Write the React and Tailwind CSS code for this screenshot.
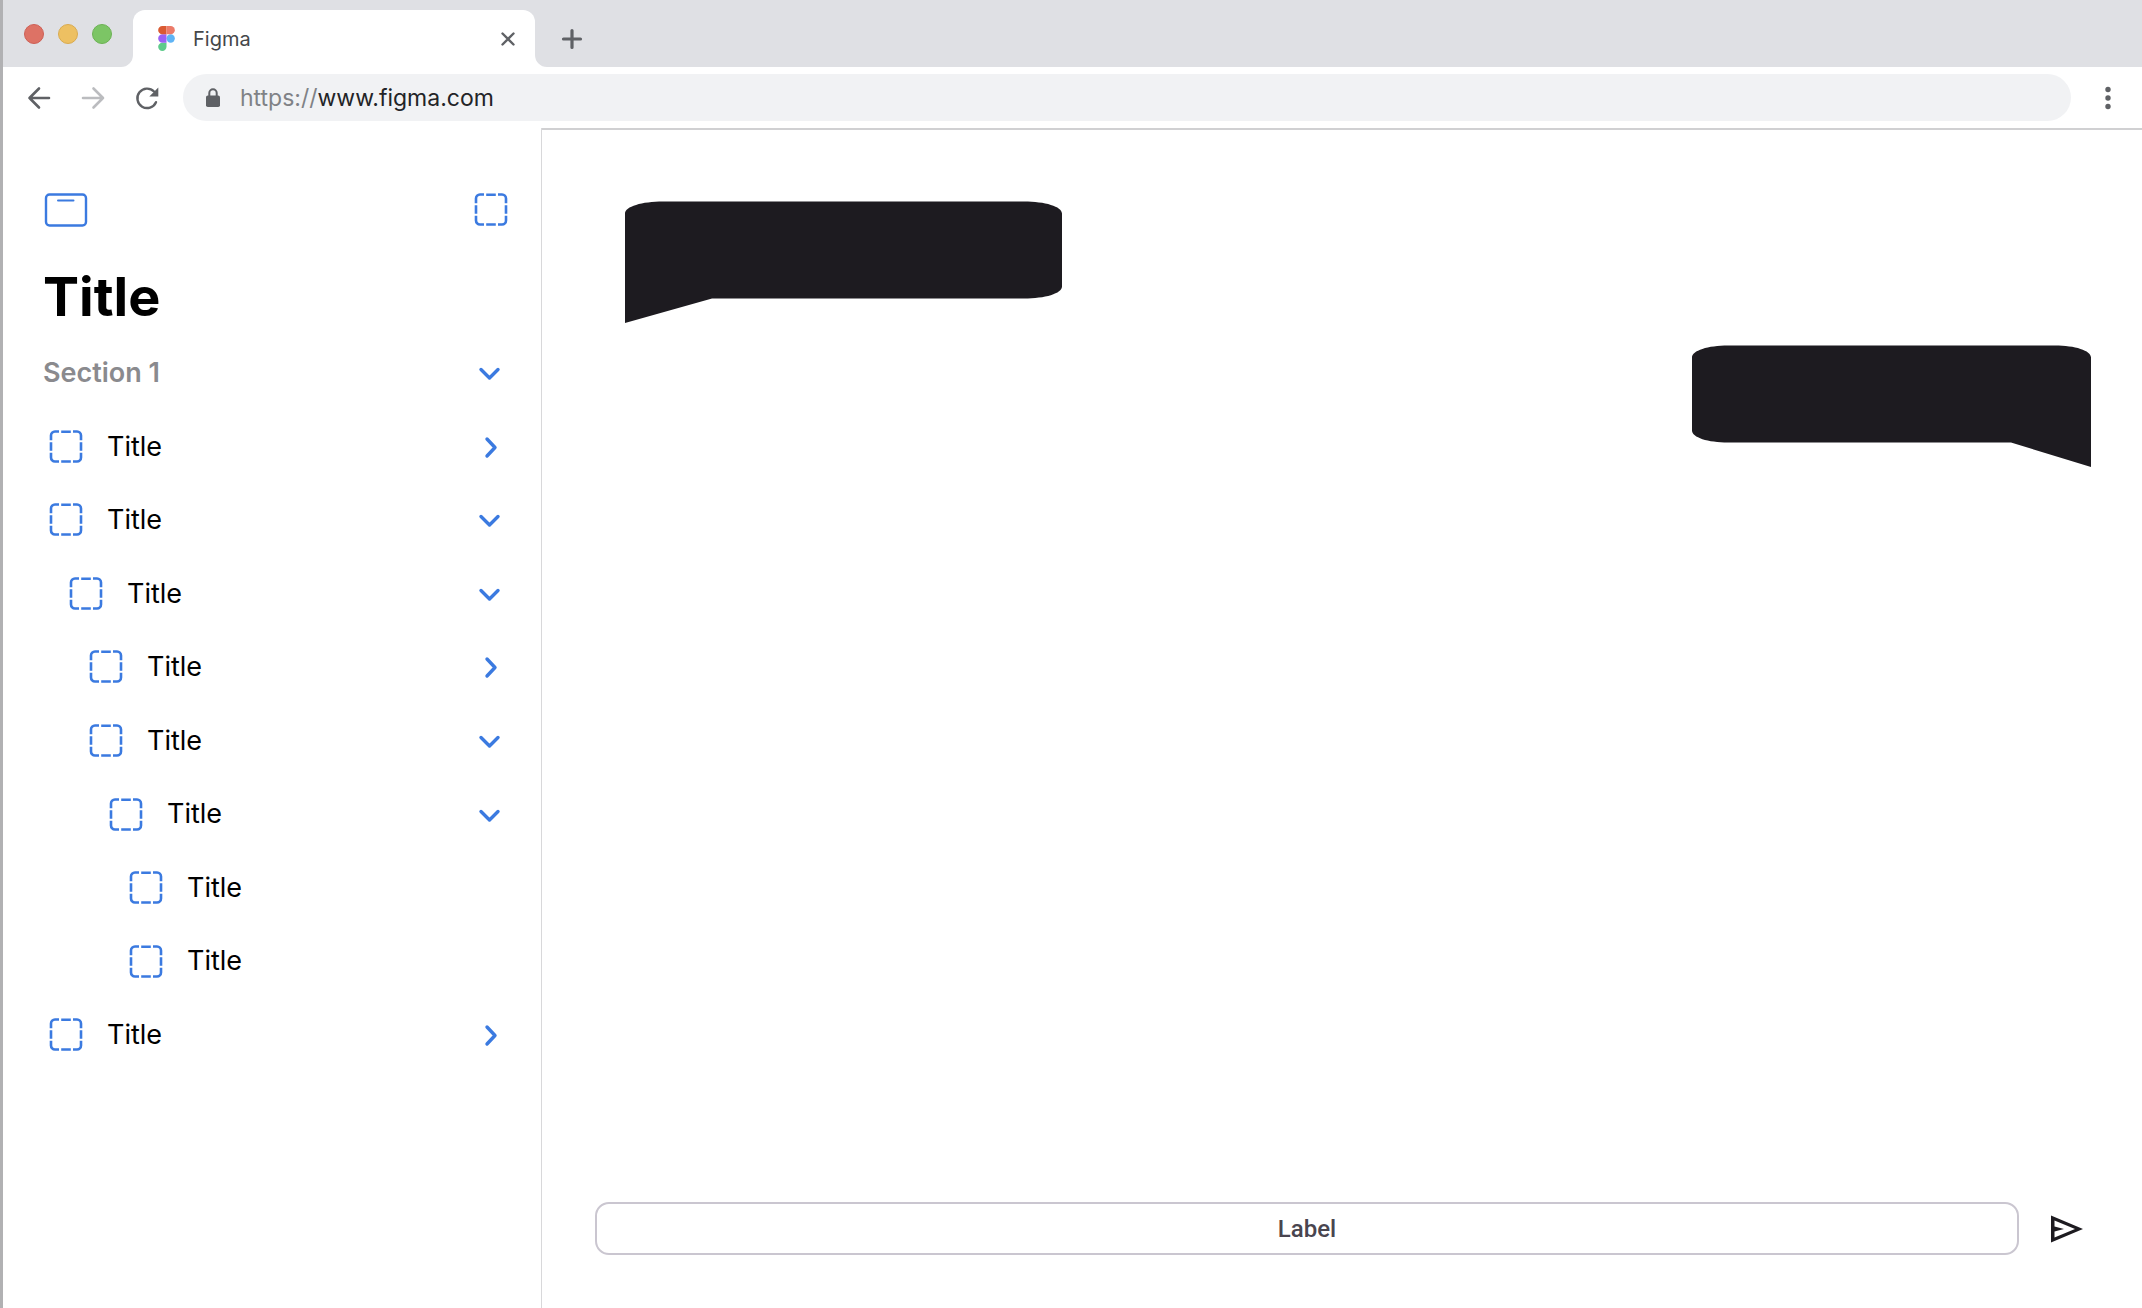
import React from "react";

const ROWS = [
  { depth: 0, state: "closed" },
  { depth: 0, state: "open" },
  { depth: 1, state: "open" },
  { depth: 2, state: "closed" },
  { depth: 2, state: "open" },
  { depth: 3, state: "open" },
  { depth: 4, state: "leaf" },
  { depth: 4, state: "leaf" },
  { depth: 0, state: "closed" },
];

const INDENTS = ["pl-[46px]", "pl-[66px]", "pl-[86px]", "pl-[106px]", "pl-[126px]"];

function DashedSquare() {
  return (
    <svg className="size-[34px] shrink-0" viewBox="0 0 34 34" fill="none" stroke="#3b7ae0" strokeWidth="2.6" aria-hidden="true">
      <path d="M2 9.700V5a4 4 0 0 1 4-4h4M24 1h4a4 4 0 0 1 4 4v4.700M32 22.300V27a4 4 0 0 1-4 4h-4M10 31H6a4 4 0 0 1-4-4v-4.700M12.200 1.300h9.600M12.200 31h9.600M2 11.700v8.600M32 11.700v8.600" transform="translate(0 .5)" />
    </svg>
  );
}

function Chevron({ open }) {
  return (
    <svg className="size-6" viewBox="0 0 24 24" fill="none" stroke="#3b7ae0" strokeWidth="3.400" strokeLinecap="round" strokeLinejoin="round" aria-hidden="true">
      <path d={open ? "M4 8.500L12.500 17L21 8.500" : "M10 4L18 12.500L10 21"} />
    </svg>
  );
}

function TabBar() {
  return (
    <header className="flex h-[67px] items-end bg-[#dfe0e4]">
      <div className="flex h-full w-[130px] shrink-0 items-center gap-[14px] pl-[21px]">
        <button aria-label="Close window" className="size-5 rounded-full border border-[#ce5f55] bg-[#dd7265]" />
        <button aria-label="Minimise window" className="size-5 rounded-full border border-[#d9ab50] bg-[#edc062]" />
        <button aria-label="Zoom window" className="size-5 rounded-full border border-[#6cb254] bg-[#7cc565]" />
      </div>
      <div className="relative flex h-[57px] w-[402px] shrink-0 items-center rounded-t-xl bg-white pr-[17px] pl-[25px]">
        <svg className="absolute bottom-0 -left-3 size-3" viewBox="0 0 12 12" fill="#fff" aria-hidden="true"><path d="M12 0v12H0A12 12 0 0 0 12 0z" /></svg>
        <svg className="absolute -right-3 bottom-0 size-3" viewBox="0 0 12 12" fill="#fff" aria-hidden="true"><path d="M0 0v12h12A12 12 0 0 1 0 0z" /></svg>
        <svg className="h-[25px] w-[17px]" viewBox="0 0 38 57" aria-hidden="true">
          <path fill="#5ecb8b" d="M0 47.500A9.500 9.500 0 0 1 9.500 38H19v9.500a9.500 9.500 0 1 1-19 0z" />
          <path fill="#5fb4f5" d="M19 28.500a9.500 9.500 0 1 1 19 0 9.500 9.500 0 0 1-19 0z" />
          <path fill="#9a61f5" d="M0 28.500A9.500 9.500 0 0 1 9.500 19H19v19H9.500A9.500 9.500 0 0 1 0 28.500z" />
          <path fill="#da5a32" d="M0 9.500A9.500 9.500 0 0 0 9.500 19H19V0H9.500A9.500 9.500 0 0 0 0 9.500z" />
          <path fill="#ec7b69" d="M19 0v19h9.500a9.500 9.500 0 1 0 0-19H19z" />
        </svg>
        <span className="ml-[18px] flex-1 text-xl text-[#45474a]">Figma</span>
        <button aria-label="Close tab" className="flex size-5 items-center justify-center">
          <svg className="size-4" viewBox="0 0 16 16" stroke="#5f6165" strokeWidth="2.400" strokeLinecap="round" aria-hidden="true"><path d="M2.500 2.500l11 11M13.500 2.500l-11 11" /></svg>
        </button>
      </div>
      <button aria-label="New tab" className="ml-[25px] flex h-[57px] w-6 items-center justify-center">
        <svg className="size-6" viewBox="0 0 24 24" stroke="#5f6165" strokeWidth="3.200" strokeLinecap="round" aria-hidden="true"><path d="M12 3.500v17M3.500 12h17" /></svg>
      </button>
    </header>
  );
}

function AddressBar() {
  return (
    <div className="flex h-[61px] items-center pr-[22px] pl-[22px]">
      <button aria-label="Back" className="size-7">
        <svg viewBox="0 0 28 28" fill="none" stroke="#5f6165" strokeWidth="2.600" strokeLinecap="round" strokeLinejoin="round"><path d="M24 14H4.500M14 4.500L4.500 14l9.500 9.500" /></svg>
      </button>
      <button aria-label="Forward" className="ml-[26px] size-7">
        <svg viewBox="0 0 28 28" fill="none" stroke="#bbbcbf" strokeWidth="2.600" strokeLinecap="round" strokeLinejoin="round"><path d="M4 14h20M14.500 4.500l9.500 9.500-9.500 9.500" /></svg>
      </button>
      <button aria-label="Reload" className="ml-[26px] size-7">
        <svg viewBox="0 0 28 28" fill="none"><path d="M23 18.200A9.700 9.700 0 1 1 21 7.500" stroke="#5f6165" strokeWidth="2.400" strokeLinecap="round" /><path d="M25.300 3.500v9H16.300z" fill="#5f6165" /></svg>
      </button>
      <div className="ml-[22px] flex h-[47px] flex-1 items-center rounded-full bg-[#f1f2f4] pl-[22px]">
        <svg className="h-5 w-4" viewBox="0 0 16 20" aria-hidden="true"><rect x="1" y="7.500" width="14" height="11.500" rx="1.800" fill="#5f6165" /><path d="M4.300 8V5a3.700 3.700 0 0 1 7.400 0v3" fill="none" stroke="#5f6165" strokeWidth="2" /></svg>
        <a href="https://www.figma.com" className="ml-[19px] pt-[2px] text-[23px] text-[#232427]"><span className="text-[#808286]">https://</span>www.figma.com</a>
      </div>
      <button aria-label="Menu" className="ml-[25px] flex h-8 w-6 items-center justify-center">
        <svg className="h-6 w-2" viewBox="0 0 8 24" fill="#5f6165" aria-hidden="true"><circle cx="4" cy="3.500" r="2.700" /><circle cx="4" cy="12" r="2.700" /><circle cx="4" cy="20.500" r="2.700" /></svg>
      </button>
    </div>
  );
}

function Sidebar() {
  return (
    <nav aria-label="Sections" className="w-[539px] shrink-0 border-r border-[#d8d8da] pt-[65px]">
      <div className="flex items-center justify-between pr-[33px] pl-10">
        <button aria-label="Toggle sidebar">
          <svg className="h-[34px] w-[46px]" viewBox="0 0 46 34" fill="none" stroke="#3b7ae0" strokeWidth="2.400" aria-hidden="true">
            <rect x="3" y="1.500" width="40" height="31" rx="3.500" />
            <path d="M15 7.500h15.500" strokeLinecap="round" strokeWidth="2" />
          </svg>
        </button>
        <button aria-label="Select area"><DashedSquare /></button>
      </div>
      <h1 className="mt-[35px] pl-10 text-[54px] leading-[70px] font-bold text-black">Title</h1>
      <div className="mt-1 flex h-[74px] items-center justify-between pr-10 pl-10">
        <h2 className="text-[27px] font-semibold text-[#8a8a8e]">Section 1</h2>
        <button aria-label="Collapse Section 1"><Chevron open /></button>
      </div>
      <ul className="grid min-h-[662px] auto-rows-fr">
        {ROWS.map((row, i) => (
          <li key={i} className={`flex items-center pr-10 ${INDENTS[row.depth]}`}>
            <DashedSquare />
            <span className="ml-6 flex-1 text-[27px] text-black">Title</span>
            {row.state !== "leaf" && (
              <button aria-label="Toggle Title" aria-expanded={row.state === "open"}><Chevron open={row.state === "open"} /></button>
            )}
          </li>
        ))}
      </ul>
    </nav>
  );
}

function Chat() {
  return (
    <main className="flex flex-1 flex-col border-t-2 border-[#d0d0d2] pt-[71px] pr-[51px] pb-[53px] pl-[53px]">
      <svg className="ml-[30px] h-[122px] w-[437px]" viewBox="0 0 437 122" fill="#1d1b20" role="img" aria-label="Received message">
        <path d="M0 12.500C0 5.500 17 .500 38 .500H399C420 .500 437 5.500 437 12.500V85.500C437 92.500 420 97.500 399 97.500H87L0 122Z" />
      </svg>
      <svg className="mt-[22px] h-[122px] w-[399px] self-end" viewBox="0 0 399 122" fill="#1d1b20" role="img" aria-label="Sent message">
        <path d="M399 12.500C399 5.500 383 .500 363 .500H36C16 .500 0 5.500 0 12.500V85.500C0 92.500 16 97.500 36 97.500H319L399 122Z" />
      </svg>
      <form className="mt-auto mr-1 flex items-center" onSubmit={(e) => e.preventDefault()}>
        <input type="text" aria-label="Label" placeholder="Label" className="h-[53px] min-w-0 flex-1 rounded-[14px] border-2 border-[#cac6d0] bg-white text-center font-[family-name:Roboto,sans-serif] text-2xl font-medium text-[#49454f] placeholder:text-[#49454f]" />
        <button aria-label="Send" className="ml-[30px] size-[38px]">
          <svg viewBox="0 0 38 38" aria-hidden="true"><path fill="#1d1b20" fillRule="evenodd" d="M2 5.500L34 19L2 32.500ZM5.500 10.500V16.500L15 19L5.500 21.500V27.500L26 19Z" /></svg>
        </button>
      </form>
    </main>
  );
}

export default function App() {
  return (
    <div className="flex min-h-screen flex-col border-l-[3px] border-[#b1b1b3] bg-white font-[family-name:Inter,sans-serif]">
      <TabBar />
      <AddressBar />
      <div className="flex flex-1">
        <Sidebar />
        <Chat />
      </div>
    </div>
  );
}
